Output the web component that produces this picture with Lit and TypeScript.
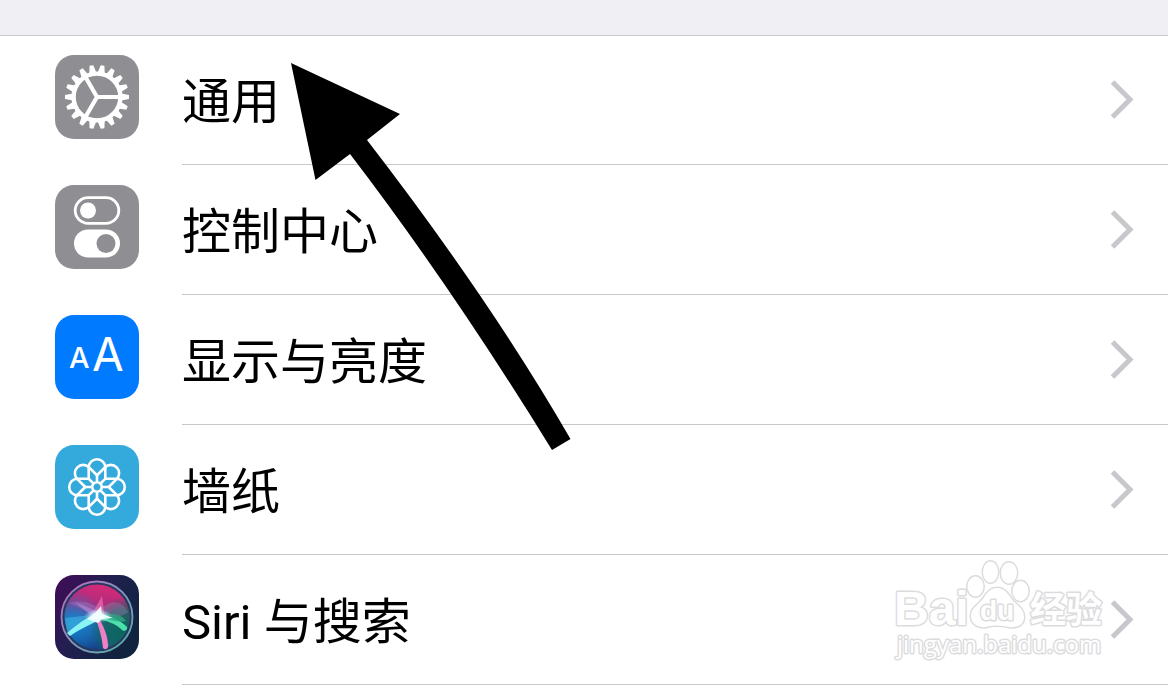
import { LitElement, html, svg, css } from "lit";
import { customElement } from "lit/decorators.js";

const range = (n: number) => Array.from({ length: n }, (_, i) => i);

const gearIcon = html`
  <svg class="icon" viewBox="0 0 84 84" aria-hidden="true">
    <rect width="84" height="84" rx="19" fill="#8e8e93" />
    <g transform="translate(42 42)">
      ${range(18).map(
        (i) => svg`<path d="M-3.600 -24 L-1.900 -32 H1.900 L3.600 -24 Z" fill="#fff" transform="rotate(${i * 20 + 10})" />`
      )}
      <circle r="23.4" fill="none" stroke="#fff" stroke-width="4.400" />
      <path d="M0 0 H22 M0 0 L-11 -19 M0 0 L-11 19" stroke="#fff" stroke-width="4.200" stroke-linejoin="round" />
    </g>
  </svg>
`;

const switchesIcon = html`
  <svg class="icon" viewBox="0 0 84 84" aria-hidden="true">
    <rect width="84" height="84" rx="19" fill="#8e8e93" />
    <rect x="20.2" y="12.7" width="43.6" height="25.6" rx="12.8" fill="none" stroke="#fff" stroke-width="2.8" />
    <circle cx="33" cy="25.5" r="8" fill="#fff" />
    <rect x="19" y="44.500" width="46" height="28" rx="14" fill="#fff" />
    <circle cx="51" cy="58.500" r="9.500" fill="#8e8e93" />
  </svg>
`;

const displayIcon = html`
  <svg class="icon" viewBox="0 0 84 84" aria-hidden="true">
    <rect width="84" height="84" rx="19" fill="#007aff" />
    <g class="aa">
      <text x="14" y="53" font-size="29" font-weight="500">A</text>
      <text x="37" y="56" font-size="46">A</text>
    </g>
  </svg>
`;

const flowerIcon = html`
  <svg class="icon" viewBox="0 0 84 84" aria-hidden="true">
    <rect width="84" height="84" rx="19" fill="#34aadc" />
    <g transform="translate(42 42)" fill="none" stroke="#fff" stroke-width="2.600" stroke-linejoin="round">
      ${range(8).map(
        (i) => svg`<path d="M-8.300 -8.300 V-19.500 A8.300 8.300 0 0 1 8.300 -19.500 V-8.300 M0 -5 V-13" transform="rotate(${i * 45})" />`
      )}
      <circle r="4.800" />
    </g>
  </svg>
`;

const siriIcon = html`
  <svg class="icon" viewBox="0 0 84 84" aria-hidden="true">
    <defs>
      <linearGradient id="siri-bg" x1="0" y1="0" x2="1" y2="0.6">
        <stop offset="0" stop-color="#430a58" />
        <stop offset="0.5" stop-color="#21204f" />
        <stop offset="1" stop-color="#10233f" />
      </linearGradient>
      <linearGradient id="siri-orb" x1="0.6" y1="0" x2="0.4" y2="1">
        <stop offset="0" stop-color="#d52b78" />
        <stop offset="0.4" stop-color="#a62b7d" />
        <stop offset="0.62" stop-color="#2465a6" />
        <stop offset="1" stop-color="#123f87" />
      </linearGradient>
      <radialGradient id="siri-blue" cx="0.15" cy="0.6" r="0.5">
        <stop offset="0" stop-color="#1483cf" />
        <stop offset="1" stop-color="#1483cf" stop-opacity="0" />
      </radialGradient>
      <radialGradient id="siri-green" cx="0.9" cy="0.7" r="0.5">
        <stop offset="0" stop-color="#08665a" />
        <stop offset="0.6" stop-color="#12665f" stop-opacity="0.8" />
        <stop offset="1" stop-color="#08665a" stop-opacity="0" />
      </radialGradient>
      <radialGradient id="siri-core">
        <stop offset="0" stop-color="#fff" />
        <stop offset="0.35" stop-color="#e6ffff" stop-opacity="0.9" />
        <stop offset="1" stop-color="#9fe8ff" stop-opacity="0" />
      </radialGradient>
      <linearGradient id="siri-rim" x1="0" y1="0" x2="1" y2="1">
        <stop offset="0" stop-color="#bf65ba" />
        <stop offset="0.5" stop-color="#8798c2" />
        <stop offset="1" stop-color="#4fb19e" />
      </linearGradient>
    </defs>
    <rect width="84" height="84" rx="19" fill="url(#siri-bg)" />
    <circle cx="42" cy="42" r="35.500" fill="#25395f" stroke="url(#siri-rim)" stroke-width="1.800" />
    <circle cx="42" cy="42" r="32.500" fill="url(#siri-orb)" />
    <circle cx="42" cy="42" r="32.500" fill="url(#siri-blue)" />
    <circle cx="42" cy="42" r="32.500" fill="url(#siri-green)" />
    <path d="M43 41 L14 28 C22 25 37 26 45 35 C55 24 67 25 73 37 C65 44 54 42 43 41Z" fill="#c999dc" opacity="0.25" />
    <path d="M35 43 L47 21 L50 44 Z" fill="#f47bbd" opacity="0.6" />
    <path d="M39 43 L20 27 L46 38 Z" fill="#d99bf0" opacity="0.4" />
    <path d="M10 43 L37 40 L46 43 L14 60 L12 57 Z" fill="#5bd1ee" opacity="0.4" />
    <path d="M46 37 C38 39 26 46 12 58 L15 61 C27 52 39 49 48 42Z" fill="#8af4f4" />
    <path d="M42 40 C52 39 64 44 72 52 C73 56 68 57 66 54 C60 48 51 46 42 43Z" fill="#4ce0ab" />
    <path d="M47 40 C59 38 68 40 71 46 C64 48 56 45 47 43Z" fill="#30a885" opacity="0.8" />
    <path d="M40 42 C44 52 47 62 48 73 C51 76 54 73 53 69 C52 58 48 50 43 42Z" fill="#f27fc3" />
    <ellipse cx="43" cy="41" rx="14" ry="7" fill="url(#siri-core)" />
    <path d="M32 44 L40 38 L46 31 L47 39 L58 43 L47 44 L43 48 Z" fill="#f2ffff" opacity="0.9" />
  </svg>
`;

const entries = [
  { label: "通用", icon: gearIcon },
  { label: "控制中心", icon: switchesIcon },
  { label: "显示与亮度", icon: displayIcon },
  { label: "墙纸", icon: flowerIcon },
  { label: "Siri 与搜索", icon: siriIcon },
];

@customElement("app-root")
export class AppRoot extends LitElement {
  static styles = css`
    :host {
      display: block;
      position: relative;
      overflow: hidden;
      min-height: 100vh;
      background: #fff;
      color: #000;
      font-family: Roboto, "Noto Sans CJK SC", sans-serif;
    }
    .band {
      box-sizing: border-box;
      height: 36px;
      background: #efeff4;
      border-bottom: 1px solid #c8c7cc;
    }
    .list {
      list-style: none;
      margin: -1px 0 0;
      padding: 0;
    }
    .row {
      display: flex;
      align-items: flex-start;
      gap: 43px;
      padding-left: 55px;
      color: inherit;
      text-decoration: none;
    }
    .icon {
      flex: none;
      width: 84px;
      height: 84px;
      margin-top: 20px;
    }
    .body {
      flex: 1;
      box-sizing: border-box;
      display: flex;
      align-items: center;
      justify-content: space-between;
      height: 130px;
      padding-right: 34px;
      border-bottom: 1px solid #c8c7cc;
    }
    .label {
      padding-top: 6px;
      font-size: 49px;
      line-height: 72px;
      white-space: nowrap;
    }
    .chevron {
      flex: none;
      width: 24px;
      height: 40px;
    }
    .aa {
      fill: #fff;
      font-family: Inter, sans-serif;
    }
    .arrow {
      position: absolute;
      left: 280px;
      top: 50px;
      width: 300px;
      height: 410px;
      pointer-events: none;
    }
    .watermark {
      position: absolute;
      right: 58px;
      top: 550px;
      width: 230px;
      height: 120px;
      pointer-events: none;
    }
    .outlined {
      fill: #fff;
      stroke: #dcdcde;
      stroke-width: 3;
      stroke-linejoin: round;
      paint-order: stroke;
    }
    .brand {
      font: bold 48px "Liberation Sans", sans-serif;
    }
    .brand-inner {
      font: bold 28px "Liberation Sans", sans-serif;
    }
    .brand-cjk {
      font: bold 36px "Noto Sans CJK SC", sans-serif;
    }
    .site {
      font: 500 24px "Open Sans", sans-serif;
    }
  `;

  render() {
    return html`
      <header class="band"></header>
      <ul class="list">
        ${entries.map(
          (entry) => html`
            <li>
              <a class="row" href="#">
                ${entry.icon}
                <span class="body">
                  <span class="label">${entry.label}</span>
                  <svg class="chevron" viewBox="0 0 24 40" aria-hidden="true">
                    <path d="M2.500 2 L20 19.500 L2.500 37" fill="none" stroke="#c7c7cc" stroke-width="5" />
                  </svg>
                </span>
              </a>
            </li>
          `
        )}
      </ul>
      <svg class="arrow" viewBox="280 50 300 410" aria-hidden="true">
        <path d="M291 63 L400 114 L367 140 Q489 298 570.500 439 L552 450 Q451 286 350 154 L315.500 180 Z" />
      </svg>
      <svg class="watermark" viewBox="0 0 230 120">
        <g class="outlined">
          <text class="brand" x="14" y="75">Bai</text>
          <ellipse cx="95.500" cy="36.500" rx="8" ry="10" />
          <ellipse cx="110.500" cy="22" rx="7.500" ry="10.500" />
          <ellipse cx="129" cy="23" rx="8" ry="10.500" />
          <ellipse cx="140.500" cy="41" rx="8" ry="10" />
          <path d="M117 38 C126 38 129 46 133 51 C138 56 144 59 144 67 C144 75 137 78 129 77 C121 75 113 75 106 77 C97 78 91 73 91 66 C91 58 98 55 102 50 C106 45 109 38 117 38Z" />
          <text class="brand-inner" x="100" y="70">du</text>
          <text class="brand-cjk" x="150" y="73">经验</text>
          <text class="site" x="17" y="103">jingyan.baidu.com</text>
        </g>
      </svg>
    `;
  }
}
